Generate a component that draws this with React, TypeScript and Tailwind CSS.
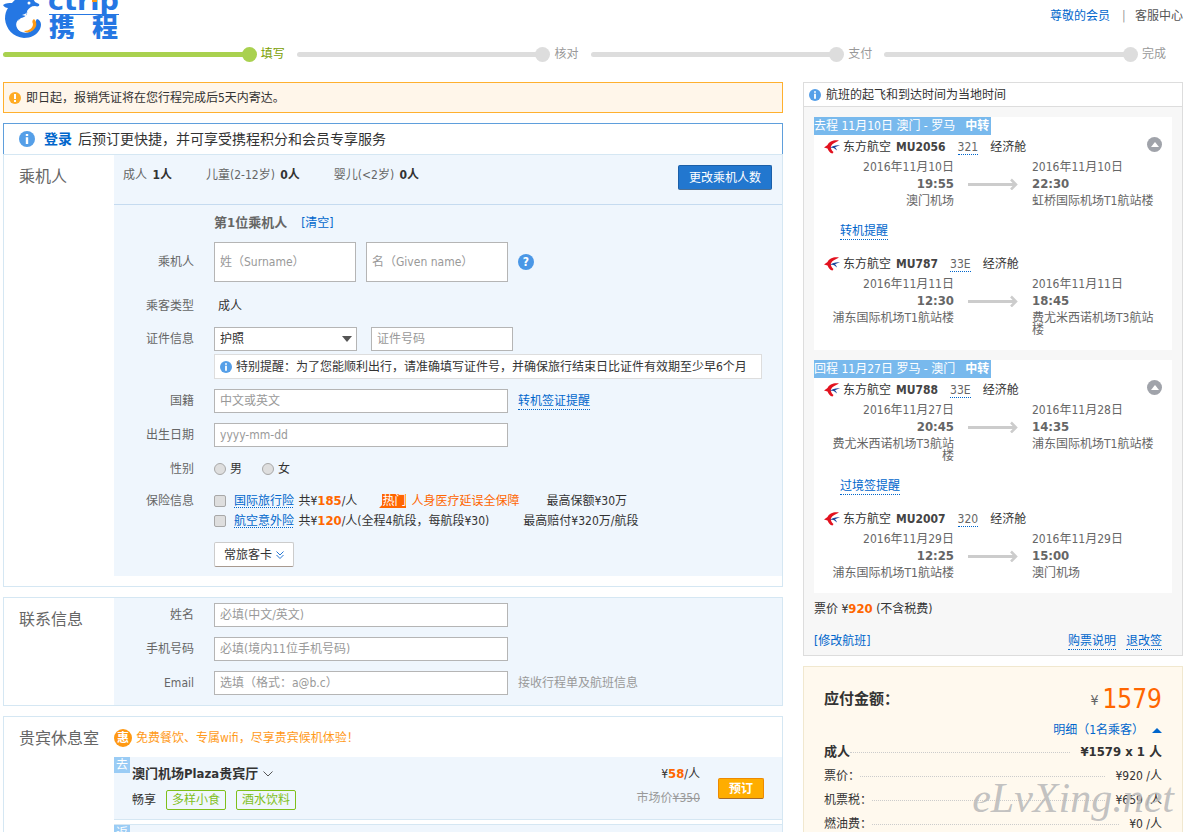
import type { ReactNode } from 'react';

interface Segment {
  flight: string;
  plane: string;
  fromDate: string;
  fromTime: string;
  fromAirport: string;
  toDate: string;
  toTime: string;
  toAirport: string;
}

interface Trip {
  direction: string;
  date: string;
  route: string;
  reminder: string;
  segments: [Segment, Segment];
}

const STEPS = ['填写', '核对', '支付', '完成'];

const TRIPS: Trip[] = [
  {
    direction: '去程',
    date: '11月10日',
    route: '澳门 - 罗马',
    reminder: '转机提醒',
    segments: [
      {
        flight: 'MU2056',
        plane: '321',
        fromDate: '2016年11月10日',
        fromTime: '19:55',
        fromAirport: '澳门机场',
        toDate: '2016年11月10日',
        toTime: '22:30',
        toAirport: '虹桥国际机场T1航站楼',
      },
      {
        flight: 'MU787',
        plane: '33E',
        fromDate: '2016年11月11日',
        fromTime: '12:30',
        fromAirport: '浦东国际机场T1航站楼',
        toDate: '2016年11月11日',
        toTime: '18:45',
        toAirport: '费尤米西诺机场T3航站楼',
      },
    ],
  },
  {
    direction: '回程',
    date: '11月27日',
    route: '罗马 - 澳门',
    reminder: '过境签提醒',
    segments: [
      {
        flight: 'MU788',
        plane: '33E',
        fromDate: '2016年11月27日',
        fromTime: '20:45',
        fromAirport: '费尤米西诺机场T3航站楼',
        toDate: '2016年11月28日',
        toTime: '14:35',
        toAirport: '浦东国际机场T1航站楼',
      },
      {
        flight: 'MU2007',
        plane: '320',
        fromDate: '2016年11月29日',
        fromTime: '12:25',
        fromAirport: '浦东国际机场T1航站楼',
        toDate: '2016年11月29日',
        toTime: '15:00',
        toAirport: '澳门机场',
      },
    ],
  },
];

const FEES = [
  { name: '票价：', value: '¥920 /人' },
  { name: '机票税：', value: '¥659 /人' },
  { name: '燃油费：', value: '¥0 /人' },
];

const inputClass =
  'block h-6 rounded-none border border-[#b5b5b5] bg-white px-[5px] text-xs text-[#333] placeholder:text-[#999] outline-none';

function Logo() {
  return (
    <svg width="117" height="39" viewBox="3 0 117 39" aria-label="Ctrip 携程" role="img">
      {/* dolphin */}
      <path
        d="M3 5C6 3 9 3 12 3C15 -1 20 -4 26 -3C30 -3 34 -1 35 2L39 4C40 6 38 7 35 6C31 6 29 8 27 11C28 15 25 17 21 18C16 21 16 28 20 31C24 34 31 33 34 28C36 24 35 21 37 19C41 20 42 25 40 29C37 35 31 38 24 38C13 37 6 29 5 19C5 14 6 11 8 8C6 8 4 7 3 5Z"
        fill="#2577e3"
      />
      <path d="M19 19C17 24 18 29 22 32C16 30 14 23 19 19Z" fill="#fff" />
      <path d="M34 19C38 23 37 29 30 32C27 33 25 32 24 31C29 31 33 28 33 24C32 22 32 20 34 19Z" fill="#ff9a14" />
      <path d="M22 15C24 14 26 14 27 12L26 16Z" fill="#fff" />
      <circle cx="29" cy="3" r="1.5" fill="#fff" />
      <text x="48" y="10" fontSize="27" fontWeight="700" fontFamily="DejaVu Sans" fill="#2577e3">
        ctrip
      </text>
      <rect x="92" y="0" width="5" height="2" fill="#ff9a14" />
      <rect x="49" y="14" width="70" height="1" fill="#2577e3" />
      <text x="49" y="37" fontSize="26" fontWeight="900" fontFamily="Noto Sans CJK SC" fill="#2577e3">
        携
      </text>
      <text x="92" y="37" fontSize="26" fontWeight="900" fontFamily="Noto Sans CJK SC" fill="#2577e3">
        程
      </text>
    </svg>
  );
}

function InfoIcon({ className = 'size-3' }: { className?: string }) {
  return (
    <svg viewBox="0 0 16 16" className={`shrink-0 ${className}`} aria-hidden="true">
      <circle cx="8" cy="8" r="8" fill="#559fe8" />
      <path d="M6.800 3h2.400v2H6.800zM6.800 6.300h2.400V13H6.800z" fill="#fff" />
    </svg>
  );
}

function WarnIcon() {
  return (
    <svg viewBox="0 0 12 12" className="size-3 shrink-0" aria-hidden="true">
      <circle cx="6" cy="6" r="6" fill="#ffac24" />
      <path d="M5 2h2v5H5zM5 8h2v2H5z" fill="#fff" />
    </svg>
  );
}

function AirlineIcon() {
  return (
    <svg viewBox="0 0 16 14" className="h-3.5 w-4 shrink-0" aria-hidden="true">
      <path d="M15 0.500C10 -0.500 5 1.500 3.500 5L0 7.500L3.500 8.500C4.500 11 6 13 8.500 13.600L9.500 12C7.500 10.500 6.500 8.500 7 6.200C8 3.800 11 2.500 15 0.500Z" fill="#e2121f" />
      <path d="M16 5.400C12 5 8.500 5.800 6 8C8 7.500 9.500 7.600 10.500 8.500L13 10.500C12.600 9 12 8 11 7.200C12.500 6.300 14 5.800 16 5.400Z" fill="#1c449b" />
    </svg>
  );
}

function LongArrow() {
  return (
    <svg viewBox="0 0 50 12" className="h-3 w-[50px]" fill="none" stroke="#ccc" aria-hidden="true">
      <path d="M0 6.500H48" strokeWidth="3" />
      <path d="M43 1.500L48 6.500L43 11.500" strokeWidth="2.500" />
    </svg>
  );
}

function DottedLink({ children }: { children: ReactNode }) {
  return (
    <a href="#" className="border-b border-dotted border-[#06c] leading-4 text-[#06c]">
      {children}
    </a>
  );
}

function Field({
  label,
  htmlFor,
  className = '',
  children,
}: {
  label: string;
  htmlFor?: string;
  className?: string;
  children: ReactNode;
}) {
  return (
    <div className={`flex items-center gap-5 ${className}`}>
      <label htmlFor={htmlFor} className="w-20 shrink-0 text-right text-[#666]">
        {label}
      </label>
      {children}
    </div>
  );
}

function Section({ title, children }: { title: string; children: ReactNode }) {
  return (
    <section className="flex border border-[#d5e7f3]">
      <h2 className="w-[110px] shrink-0 pt-2.5 pl-[15px] text-base leading-6 text-[#666]">{title}</h2>
      <div className="min-w-0 flex-1">{children}</div>
    </section>
  );
}

function FlightSegment({ segment }: { segment: Segment }) {
  return (
    <div>
      <div className="flex h-5 items-center pl-2.5">
        <AirlineIcon />
        <span className="ml-[3px]">东方航空</span>
        <strong className="ml-[5px] text-[#444]">{segment.flight}</strong>
        <span className="mr-3 ml-3 border-b border-dotted border-[#06c] leading-[14px] text-[#666]">{segment.plane}</span>
        <span>经济舱</span>
      </div>
      <div className="flex text-[#666]">
        <div className="w-[140px] pl-3 text-right">
          <div className="leading-5">{segment.fromDate}</div>
          <div className="text-[13px] leading-[14px] font-bold">{segment.fromTime}</div>
          <div className="mt-1 leading-3">{segment.fromAirport}</div>
        </div>
        <div className="mx-3.5 pt-[21px]">
          <LongArrow />
        </div>
        <div className="w-[126px]">
          <div className="leading-5">{segment.toDate}</div>
          <div className="text-[13px] leading-[14px] font-bold">{segment.toTime}</div>
          <div className="mt-1 leading-3">{segment.toAirport}</div>
        </div>
      </div>
    </div>
  );
}

function TripCard({ trip }: { trip: Trip }) {
  return (
    <div className="relative bg-white pb-3.5">
      <div className="flex">
        <h3 className="flex h-[18px] items-center bg-[#78b9ed] pr-0.5 text-white">
          {trip.direction} {trip.date} {trip.route}
          <strong className="ml-2.5">中转</strong>
        </h3>
      </div>
      <button type="button" aria-label="收起" className="absolute top-5 right-2.5 flex size-[15px] items-center justify-center rounded-full bg-[#a0a3aa]">
        <svg viewBox="0 0 8 5" className="h-[5px] w-2" aria-hidden="true">
          <path d="M0 5L4 0L8 5Z" fill="#fff" />
        </svg>
      </button>
      <div className="pt-0.5">
        <FlightSegment segment={trip.segments[0]} />
      </div>
      <div className="mt-4 mb-3.5 flex pl-[26px]">
        <DottedLink>{trip.reminder}</DottedLink>
      </div>
      <FlightSegment segment={trip.segments[1]} />
    </div>
  );
}

function PassengerSection() {
  return (
    <Section title="乘机人">
      <div className="mb-2.5 bg-[#eff6fd] pb-[9px]">
        <div className="flex h-[50px] border-b border-[#c5dbf0] pr-2.5 pl-[9px] text-[#666]">
          <div className="flex flex-1 gap-[34px] pt-2.5 leading-5">
            <span>
              成人 <b className="ml-0.5 text-[#333]">1人</b>
            </span>
            <span>
              儿童(2-12岁) <b className="ml-0.5 text-[#333]">0人</b>
            </span>
            <span>
              婴儿(&lt;2岁) <b className="ml-0.5 text-[#333]">0人</b>
            </span>
          </div>
          <button type="button" className="mt-2.5 h-[25px] rounded-xs border border-[#1b5fa8] border-b-[#4d6f93] bg-[#2277cf] px-[10px] text-white">
            更改乘机人数
          </button>
        </div>

        <div className="flex gap-3.5 pt-2 pl-[100px] leading-5">
          <strong className="text-[13px] text-[#666]">第1位乘机人</strong>
          <a href="#" className="text-[#06c]">[清空]</a>
        </div>

        <Field label="乘机人" htmlFor="surname" className="mt-[9px]">
          <div className="flex items-center gap-2.5">
            <input id="surname" placeholder="姓（Surname）" className={`${inputClass} h-10 w-[142px]`} />
            <input aria-label="名" placeholder="名（Given name）" className={`${inputClass} h-10 w-[142px]`} />
            <button type="button" aria-label="帮助" className="flex size-4 items-center justify-center rounded-full bg-[#4a97e6] font-bold text-white">
              ?
            </button>
          </div>
        </Field>
        <Field label="乘客类型" className="mt-3.5 h-5">
          <span className="pl-1">成人</span>
        </Field>
        <Field label="证件信息" htmlFor="id-type" className="mt-[11px]">
          <div className="flex gap-3.5">
            <div className="relative">
              <select id="id-type" className={`${inputClass} w-[143px] appearance-none`}>
                <option>护照</option>
              </select>
              <svg viewBox="0 0 10 6" className="pointer-events-none absolute top-[9px] right-[5px] h-1.5 w-2.5" aria-hidden="true">
                <path d="M0 0H10L5 6Z" fill="#555" />
              </svg>
            </div>
            <input aria-label="证件号码" placeholder="证件号码" className={`${inputClass} w-[142px]`} />
          </div>
        </Field>
        <div className="mt-[3px] mr-5 ml-[100px] flex h-[25px] items-center gap-1 border border-[#ddd] bg-white px-[5px]">
          <InfoIcon />
          <span className="whitespace-nowrap">特别提醒：为了您能顺利出行，请准确填写证件号，并确保旅行结束日比证件有效期至少早6个月</span>
        </div>
        <Field label="国籍" htmlFor="nation" className="mt-2.5">
          <div className="flex items-center gap-2.5">
            <input id="nation" placeholder="中文或英文" className={`${inputClass} w-[294px]`} />
            <DottedLink>转机签证提醒</DottedLink>
          </div>
        </Field>
        <Field label="出生日期" htmlFor="birthday" className="mt-2.5">
          <input id="birthday" placeholder="yyyy-mm-dd" className={`${inputClass} w-[294px]`} />
        </Field>
        <Field label="性别" className="mt-3 h-5">
          <div className="flex gap-5">
            {['男', '女'].map((sex) => (
              <label key={sex} className="flex items-center gap-1">
                <input type="radio" name="sex" className="size-3 appearance-none rounded-full border border-[#a8a8a8] bg-[#dedede]" />
                {sex}
              </label>
            ))}
          </div>
        </Field>
        <div className="mt-3 flex gap-5 leading-5">
          <span className="w-20 shrink-0 text-right text-[#666]">保险信息</span>
          <div>
            <div className="flex items-center">
              <input id="travel" type="checkbox" className="mr-2 size-3 appearance-none rounded-xs border border-[#a8a8a8] bg-[#dedede]" />
              <label htmlFor="travel">
                <a href="#" className="mr-px text-[#06c] underline decoration-dotted underline-offset-2">国际旅行险</a>
                {' 共¥'}
                <b className="text-[13px] text-[#f60]">185</b>/人
              </label>
              <span className="ml-[22px] flex">
                <svg viewBox="0 0 3 14" className="h-3.5 w-[3px]" aria-hidden="true">
                  <path d="M3 0V14H0L3 11Z" fill="#f60" />
                </svg>
                <span className="bg-[#f60] leading-[14px] text-white">热门</span>
              </span>
              <span className="ml-[5px] text-[#f60]">人身医疗延误全保障</span>
              <span className="ml-[27px]">最高保额¥30万</span>
            </div>
            <div className="flex items-center">
              <input id="accident" type="checkbox" className="mr-2 size-3 appearance-none rounded-xs border border-[#a8a8a8] bg-[#dedede]" />
              <label htmlFor="accident">
                <a href="#" className="mr-px text-[#06c] underline decoration-dotted underline-offset-2">航空意外险</a>
                {' 共¥'}
                <b className="text-[13px] text-[#f60]">120</b>/人(全程4航段，每航段¥30)
              </label>
              <span className="ml-[34px]">最高赔付¥320万/航段</span>
            </div>
          </div>
        </div>
        <button type="button" className="mt-[11px] ml-[100px] flex h-[25px] items-center gap-1 rounded-xs border border-[#ccc] border-b-[#a89a90] bg-white px-[9px]">
          常旅客卡
          <svg viewBox="0 0 8 8" className="size-2" fill="none" stroke="#2577d3" aria-hidden="true">
            <path d="M0.500 0.500L4 4L7.500 0.500M0.500 4L4 7.500L7.500 4" />
          </svg>
        </button>
      </div>
    </Section>
  );
}

function ContactSection() {
  return (
    <Section title="联系信息">
      <div className="space-y-2.5 bg-[#eff6fd] pt-[5px] pb-2.5">
        <Field label="姓名" htmlFor="name">
          <input id="name" placeholder="必填(中文/英文)" className={`${inputClass} w-[294px]`} />
        </Field>
        <Field label="手机号码" htmlFor="mobile">
          <input id="mobile" placeholder="必填(境内11位手机号码)" className={`${inputClass} w-[294px]`} />
        </Field>
        <Field label="Email" htmlFor="email">
          <div className="flex items-center gap-2.5 text-[#999]">
            <input id="email" placeholder="选填（格式：a@b.c）" className={`${inputClass} w-[294px]`} />
            接收行程单及航班信息
          </div>
        </Field>
      </div>
    </Section>
  );
}

function LoungeItem({ tag, name }: { tag: string; name: string }) {
  return (
    <div className="flex h-[63px] border-b border-[#d5e7f3] bg-[#eff6fd]">
      <span className="h-4 w-4 shrink-0 bg-[#9accf5] text-center leading-4 text-white">{tag}</span>
      <div className="ml-0.5 flex-1 pt-[7px]">
        <div className="flex items-center gap-[5px] text-[13px] leading-5 font-bold">
          {name}
          <svg viewBox="0 0 10 6" className="h-1.5 w-2.5" fill="none" stroke="#555" aria-hidden="true">
            <path d="M0.500 0.500L5 5L9.500 0.500" />
          </svg>
        </div>
        <div className="mt-1.5 flex items-center gap-2.5 leading-[18px]">
          畅享
          <span className="rounded-xs border border-[#7fbf1a] px-[5px] text-[#7fbf1a]">多样小食</span>
          <span className="rounded-xs border border-[#7fbf1a] px-[5px] text-[#7fbf1a]">酒水饮料</span>
        </div>
      </div>
      <div className="pt-[7px] text-right leading-5">
        <div>
          ¥<b className="text-[13px] text-[#f60]">58</b>/人
        </div>
        <div className="mt-1 text-[#999]">
          市场价<s>¥350</s>
        </div>
      </div>
      <button type="button" className="mt-[21px] mr-[18px] ml-[18px] h-[21px] w-[46px] rounded-xs border border-[#ee8a00] border-b-[#a56a2c] bg-[#ffad00] leading-[18px] font-bold text-white">
        预订
      </button>
    </div>
  );
}

function LoungeSection() {
  return (
    <Section title="贵宾休息室">
      <div className="flex h-10 items-center gap-1 pt-px text-[#ff9a1a]">
        <span className="flex size-[18px] items-center justify-center rounded-full bg-[#ff9913] font-bold text-white">惠</span>
        免费餐饮、专属wifi，尽享贵宾候机体验！
      </div>
      <LoungeItem tag="去" name="澳门机场Plaza贵宾厅" />
      <div className="mt-1 border-t border-[#d5e7f3]">
        <LoungeItem tag="返" name="罗马机场Plaza贵宾厅" />
      </div>
    </Section>
  );
}

function PriceBox() {
  return (
    <section className="relative border border-[#f1e8cf] bg-[#fff9ee] px-5 pt-[13px] pb-5">
      <div className="flex h-10 items-center justify-between">
        <strong className="text-[15px]">应付金额：</strong>
        <span className="flex items-center gap-1 text-sm text-[#666]">
          ¥<span className="text-[26px] text-[#f60]">1579</span>
        </span>
      </div>
      <div className="flex justify-end leading-5">
        <button type="button" className="flex items-center gap-2 text-[#06c]">
          明细（1名乘客）
          <svg viewBox="0 0 10 5" className="h-[5px] w-2.5" aria-hidden="true">
            <path d="M0 5L5 0L10 5Z" fill="#06c" />
          </svg>
        </button>
      </div>
      <div className="flex h-6 items-center text-[13px] font-bold">
        <span>成人</span>
        <span className="mr-2.5 flex-1 border-b border-dotted border-[#ccc]" />
        <span>¥1579 x 1 人</span>
      </div>
      {FEES.map((fee) => (
        <div key={fee.name} className="flex h-6 items-center">
          <span>{fee.name}</span>
          <span className="mr-2.5 flex-1 border-b border-dotted border-[#ccc]" />
          <span>{fee.value}</span>
        </div>
      ))}
      <span className="pointer-events-none absolute top-[107px] right-2 font-['Liberation_Serif',serif] text-[42px] leading-[48px] text-[#bbb]/90 italic">
        eLvXing.net
      </span>
    </section>
  );
}

export default function App() {
  return (
    <div className="h-screen overflow-hidden bg-white pl-[3px] font-['DejaVu_Sans_Condensed','Noto_Sans_CJK_SC',sans-serif] text-xs text-[#333]">
      <header className="flex h-[39px] justify-between">
        <Logo />
        <nav className="flex gap-3 pt-2 leading-4">
          <a href="#" className="text-[#06c]">尊敬的会员</a>
          <span className="w-px self-start text-[#999]">|</span>
          <a href="#" className="text-[#555]">客服中心</a>
        </nav>
      </header>

      <ol className="mt-[7px] flex gap-3 pr-[17px] leading-4">
        {STEPS.map((step, i) => (
          <li key={step} className={`flex flex-1 items-center ${i === 0 ? 'text-[#7a9e00]' : 'text-[#999]'}`}>
            <span className={`-mr-1 h-[5px] flex-1 rounded-full ${i === 0 ? 'bg-[#a9d14f]' : 'bg-[#ddd]'}`} />
            <span className={`mr-1 size-[15px] rounded-full ${i === 0 ? 'bg-[#a9d14f]' : 'bg-[#ddd]'}`} />
            {step}
          </li>
        ))}
      </ol>

      <div className="mt-5 flex items-start gap-5">
        <main className="min-w-0 flex-1 space-y-2.5">
          <div className="flex h-[31px] items-center gap-[5px] border border-[#ffb02e] bg-[#fff6ea] px-[5px]">
            <WarnIcon />
            即日起，报销凭证将在您行程完成后5天内寄达。
          </div>
          <div>
            <div className="flex h-[31px] items-center border border-b-0 border-[#5f9fdc] pl-[15px] text-sm">
              <InfoIcon className="mr-[9px] size-4" />
              <a href="#" className="mr-1.5 font-bold text-[#06c]">登录</a>
              后预订更快捷，并可享受携程积分和会员专享服务
            </div>
            <PassengerSection />
          </div>
          <ContactSection />
          <LoungeSection />
        </main>

        <aside className="w-[380px] shrink-0 space-y-2.5">
          <section className="border border-[#ddd] bg-[#f7f7f7]">
            <div className="flex h-6 items-center gap-[5px] border-b border-[#ddd] bg-white px-[5px]">
              <InfoIcon />
              航班的起飞和到达时间为当地时间
            </div>
            <div className="space-y-2.5 p-2.5">
              {TRIPS.map((trip) => (
                <TripCard key={trip.direction} trip={trip} />
              ))}
            </div>
            <div className="px-2.5 pb-1">
              <div className="flex items-center leading-3">
                <span>
                  票价 ¥<b className="text-[13px] text-[#f60]">920</b> (不含税费)
                </span>
              </div>
              <div className="mt-4 flex items-center gap-2.5 pr-2.5 leading-5">
                <a href="#" className="flex-1 text-[#06c]">[修改航班]</a>
                <DottedLink>购票说明</DottedLink>
                <DottedLink>退改签</DottedLink>
              </div>
            </div>
          </section>
          <PriceBox />
        </aside>
      </div>
    </div>
  );
}
